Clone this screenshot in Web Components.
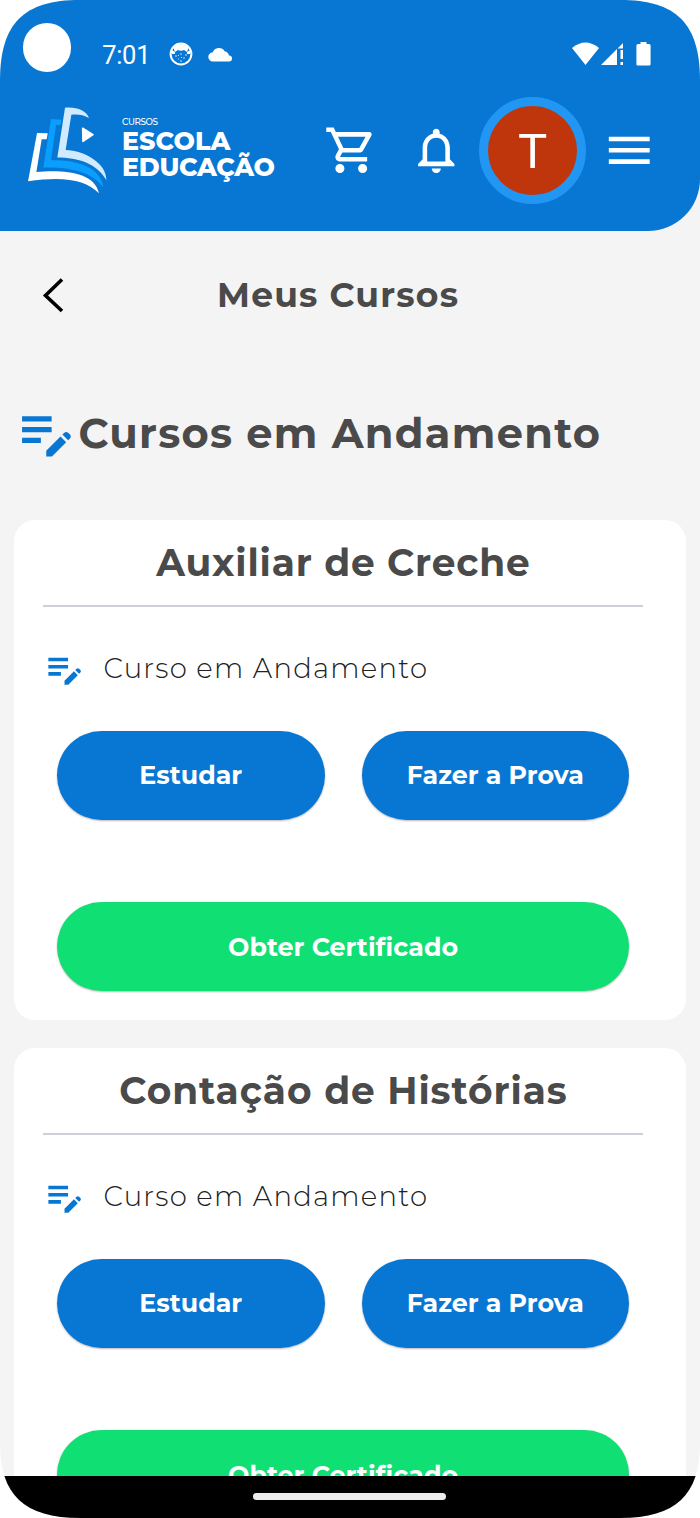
<!DOCTYPE html>
<html lang="pt-BR">
<head>
    <meta charset="UTF-8">
    <meta name="viewport" content="width=device-width, initial-scale=1.0">
    <title>Meus Cursos</title>
    <style>
        body {
            margin: 0;
            background: #fff;
            font-family: Montserrat, Inter, "Open Sans", sans-serif;
        }
    </style>
</head>
<body>
    <phone-screen>
        <app-header slot="header"></app-header>
        <page-bar width="241">Meus Cursos</page-bar>
        <section-title width="521.5">Cursos em Andamento</section-title>
        <course-card title="Auxiliar de Creche" width="373.5"></course-card>
        <course-card title="Contação de Histórias" width="447.5"></course-card>
    </phone-screen>

    <template id="phone-screen-template">
        <style>
            :host {
                display: flex;
                flex-direction: column;
                width: 700px;
                height: 1518px;
                background: #f4f4f4;
                overflow: hidden;
                clip-path: path("M0 81C0 23 24 0 80 0H620C676 0 700 23 700 81V1443C700 1495 676 1518 620 1518H80C24 1518 0 1495 0 1443Z");
            }
            main {
                flex: 1;
                min-height: 0;
                overflow: hidden;
            }
            nav {
                box-sizing: border-box;
                height: 42.5px;
                padding: 17.5px 0 0 253px;
                background: #000;
            }
            nav span {
                display: block;
                width: 193px;
                height: 7px;
                border-radius: 4px;
                background: #ececec;
            }
        </style>
        <slot name="header"></slot>
        <main><slot></slot></main>
        <nav><span></span></nav>
    </template>

    <template id="app-header-template">
        <style>
            :host {
                display: block;
                box-sizing: border-box;
                height: 230.5px;
                background: #0877d4;
                border-bottom-right-radius: 52px;
                color: #fff;
            }
            .status, .bar {
                display: flex;
                align-items: center;
            }
            .status {
                height: 95px;
                padding-left: 22.8px;
            }
            .camera {
                width: 48.4px;
                height: 48.4px;
                border-radius: 50%;
                background: #fff;
            }
            .status svg, .time {
                margin-top: 13px;
            }
            .time {
                width: 67px;
                margin-left: 31px;
                padding-top: 2px;
                font: 25.5px/30px Roboto, sans-serif;
                letter-spacing: -0.3px;
            }
            .cloud {
                margin-left: 15px;
            }
            .wifi {
                margin-left: 339px;
            }
            .signal {
                margin-left: 2px;
            }
            .battery {
                margin-left: 13px;
            }
            .bar {
                height: 111px;
                padding-left: 28px;
            }
            .name {
                display: flex;
                flex-direction: column;
                width: 201.5px;
                margin-left: 15px;
            }
            .name fit-text {
                font-size: 25.3px;
                line-height: 26px;
                font-weight: 800;
            }
            .name .small {
                font-size: 8.8px;
                line-height: 13px;
                font-weight: 500;
                margin-top: -6px;
            }
            .bell {
                margin-left: 31px;
            }
            .avatar {
                box-sizing: border-box;
                width: 107px;
                height: 107px;
                margin: 0 15.5px;
                border: 9px solid #2196f3;
                border-radius: 50%;
                background: #bf360c;
                font: 49px/91px Roboto, sans-serif;
                text-align: center;
            }
        </style>
        <div class="status">
            <span class="camera"></span>
            <span class="time">7:01</span>
            <svg class="cat" width="24" height="24" viewBox="0 0 24 24">
                <circle cx="12" cy="12" r="10.4" fill="none" stroke="#fff" stroke-width="2"/>
                <path d="M4 5Q12-1 20 5L18 10L15 8Q12 9.500 9 8L6 10Z" fill="#fff"/>
                <path d="M3 8l3 2v2H3ZM21 8l-3 2v2h3Z" fill="#fff"/>
                <path d="M6 14h2M9 17h1M11 12h2M14 16h2M16 13h2M11 19h2M9 13.500h1M12 15.500h1" stroke="#fff" stroke-width="1" opacity=".75"/>
            </svg>
            <svg class="cloud" width="25" height="15" viewBox="0 0 25 15">
                <path d="M5 14.500a4.600 4.600 0 0 1-.2-9.200A6.500 6.500 0 0 1 16.600 4.200 5.400 5.400 0 0 1 21 8.500a3 3 0 0 1 0 6Z" fill="#fff"/>
            </svg>
            <svg class="wifi" width="27" height="24" viewBox="0 0 27 24">
                <path d="M0 6Q13.500-5 27 6L13.500 23Z" fill="#fff"/>
            </svg>
            <svg class="signal" width="22" height="24" viewBox="0 0 22 24">
                <path d="M0 23L16 7V23Z" fill="#fff"/>
                <path d="M16.500 6.500L22 1V6.500ZM19.500 8h2.500v9h-2.500ZM19.500 20h2.500v3h-2.500Z" fill="#fff"/>
            </svg>
            <svg class="battery" width="15" height="24" viewBox="0 0 15 24">
                <path d="M4.500 0h6v2H13a1.600 1.600 0 0 1 1.600 1.600v18.500A1.500 1.500 0 0 1 13 23.600H2A1.500 1.500 0 0 1 .4 22V3.600A1.600 1.600 0 0 1 2 2h2.500Z" fill="#fff"/>
            </svg>
        </div>
        <div class="bar">
            <svg width="79" height="86.600" viewBox="39 35 237 260">
                <path d="M66 113L98 114L95 132L80 132L64 230C130 224 238 224 252 294C212 255 150 242 39 258Z" fill="#fff"/>
                <path d="M108 71L140 73L136 89L123 89L108 195C180 192 258 215 265 276C230 228 160 214 85 217Z" fill="#0a9fff"/>
                <path d="M150 37C185 34 214 45 222 68C205 57 185 56 169 58L152 164C210 166 276 205 274 254C245 205 190 187 127 187Z" fill="#d0ebff"/>
                <path d="M203 99L234 118L204 138Z" fill="#fff" stroke="#fff" stroke-width="5" stroke-linejoin="round"/>
            </svg>
            <div class="name">
                <fit-text class="small" width="36">CURSOS</fit-text>
                <fit-text width="108.500">ESCOLA</fit-text>
                <fit-text width="153">EDUCAÇÃO</fit-text>
            </div>
            <ui-icon name="cart" size="54.500"></ui-icon>
            <ui-icon class="bell" name="bell" size="54.500"></ui-icon>
            <span class="avatar">T</span>
            <ui-icon name="menu" size="54.500"></ui-icon>
        </div>
    </template>

    <template id="page-bar-template">
        <style>
            :host {
                display: flex;
                align-items: center;
                height: 129px;
                padding-left: 42px;
                color: #4a4a4a;
                font-size: 34.5px;
                font-weight: 700;
            }
            svg {
                margin-right: 153px;
            }
        </style>
        <svg width="22" height="36" viewBox="0 0 22 36">
            <path d="M20 2.500L3.500 18.500L20 34" fill="none" stroke="#000" stroke-width="3.600"/>
        </svg>
        <fit-text><slot></slot></fit-text>
    </template>

    <template id="section-title-template">
        <style>
            :host {
                display: flex;
                align-items: center;
                height: 146px;
                padding: 0 0 14.5px 14px;
                color: #4a4a4a;
                font-size: 41.5px;
                font-weight: 700;
            }
        </style>
        <ui-icon name="note" size="64.5"></ui-icon>
        <fit-text><slot></slot></fit-text>
    </template>

    <template id="course-card-template">
        <style>
            :host {
                display: block;
                box-sizing: border-box;
                width: 672px;
                height: 500px;
                margin: 0 0 28px 14px;
                padding: 0 43px 0 29px;
                border-radius: 21px;
                background: #fff;
            }
            h2 {
                margin: 0;
                height: 85px;
                line-height: 85px;
                border-bottom: 2px solid #cfcedb;
                color: #4a4a4a;
                font-size: 37.5px;
                font-weight: 700;
                text-align: center;
            }
            .state {
                display: flex;
                align-items: center;
                gap: 17.5px;
                box-sizing: border-box;
                height: 124px;
                padding-bottom: 2px;
                color: #222;
                font-size: 27.5px;
                font-weight: 300;
            }
            .actions {
                display: grid;
                grid-template-columns: 1fr 1fr;
                gap: 82px 37px;
                padding: 0 14px;
            }
            .wide {
                grid-column: 1 / 3;
                --pill-line: 90px;
            }
        </style>
        <h2><fit-text id="title"></fit-text></h2>
        <div class="state">
            <ui-icon name="note" size="43"></ui-icon>
            <fit-text width="323.5">Curso em Andamento</fit-text>
        </div>
        <div class="actions">
            <pill-button width="103">Estudar</pill-button>
            <pill-button width="177">Fazer a Prova</pill-button>
            <pill-button class="wide" color="#10df74" width="230">Obter Certificado</pill-button>
        </div>
    </template>

    <template id="pill-button-template">
        <style>
            :host {
                display: block;
            }
            button {
                display: block;
                width: 100%;
                height: 89px;
                padding: 0;
                border: 0;
                border-radius: 45px;
                background: var(--pill-color, #0877d4);
                box-shadow: 0 1px 2px rgba(0, 0, 0, 0.28);
                color: #fff;
                font: 700 25.3px/89px Montserrat, Inter, "Open Sans", sans-serif;
                line-height: var(--pill-line, 89px);
            }
        </style>
        <button><fit-text><slot></slot></fit-text></button>
    </template>

    <script>
        "use strict";
        const icons = {
            cart: "M15.550 13c.75 0 1.410-.41 1.750-1.030l3.580-6.490A.996.996 0 0 0 20.010 4H5.210l-.94-2H1v2h2l3.600 7.590-1.350 2.440C4.520 15.370 5.480 17 7 17h12v-2H7l1.100-2h7.450zM6.160 6h12.150l-2.760 5H8.530L6.160 6zM7 18a2 2 0 1 0 0 4 2 2 0 0 0 0-4zm10 0a2 2 0 1 0 0 4 2 2 0 0 0 0-4z",
            bell: "M12 22c1.100 0 2-.9 2-2h-4c0 1.100.9 2 2 2zm6-6v-5c0-3.070-1.630-5.640-4.500-6.320V4c0-.83-.67-1.500-1.500-1.500s-1.500.67-1.500 1.500v.68C7.640 5.360 6 7.920 6 11v5l-2 2v1h16v-1l-2-2zm-2 1H8v-6c0-2.480 1.510-4.500 4-4.500s4 2.020 4 4.500v6z",
            menu: "M3 18h18v-2H3v2zm0-5h18v-2H3v2zm0-7v2h18V6H3z",
            note: "M3 10h11v2H3v-2zm0-2h11V6H3v2zm0 8h7v-2H3v2zm15.010-3.130.71-.71c.39-.39 1.020-.39 1.410 0l.71.71c.39.39.39 1.020 0 1.410l-.71.71-2.120-2.120zm-.71.71-5.300 5.300V21h2.120l5.300-5.300-2.120-2.120z"
        };

        function attach(host, id) {
            const root = host.attachShadow({ mode: "open" });
            const template = document.getElementById(id);
            root.appendChild(document.importNode(template.content, true));
            return root;
        }

        // one line of text, letter-spaced to the given width
        class FitText extends HTMLElement {
            constructor() {
                super();
                this.attachShadow({ mode: "open" }).innerHTML = `
                    <style>
                        :host { display: inline-block; white-space: nowrap; text-align: left; vertical-align: top; }
                        span { display: inline-block; vertical-align: top; }
                    </style>
                    <span><slot></slot></span>`;
            }
            connectedCallback() {
                requestAnimationFrame(() => this.fit());
            }
            fit() {
                const span = this.shadowRoot.querySelector("span");
                const width = Number(this.getAttribute("width"));
                const natural = span.getBoundingClientRect().width;
                if (!width || !natural) return;
                // a slot inside this one may hold the text
                const nodes = span.querySelector("slot").assignedNodes({ flatten: true });
                const length = nodes.map(node => node.textContent).join("").trim().length;
                this.style.width = width + "px";
                span.style.letterSpacing = (width - natural) / (length - 1) + "px";
            }
        }

        class UiIcon extends HTMLElement {
            connectedCallback() {
                const size = this.getAttribute("size");
                const color = this.getAttribute("name") === "note" ? "#0877d4" : "#fff";
                this.attachShadow({ mode: "open" }).innerHTML = `
                    <style>:host { display: block; flex: none; } svg { display: block; }</style>
                    <svg width="${size}" height="${size}" viewBox="0 0 24 24">
                        <path d="${icons[this.getAttribute("name")]}" fill="${color}"/>
                    </svg>`;
            }
        }

        class PhoneScreen extends HTMLElement {
            constructor() {
                super();
                attach(this, "phone-screen-template");
            }
        }

        class AppHeader extends HTMLElement {
            constructor() {
                super();
                attach(this, "app-header-template");
            }
        }

        class PageBar extends HTMLElement {
            constructor() {
                super();
                const root = attach(this, "page-bar-template");
                root.querySelector("fit-text").setAttribute("width", this.getAttribute("width"));
            }
        }

        class SectionTitle extends HTMLElement {
            constructor() {
                super();
                const root = attach(this, "section-title-template");
                root.querySelector("fit-text").setAttribute("width", this.getAttribute("width"));
            }
        }

        class PillButton extends HTMLElement {
            connectedCallback() {
                const root = attach(this, "pill-button-template");
                root.querySelector("fit-text").setAttribute("width", this.getAttribute("width"));
                if (this.hasAttribute("color")) {
                    this.style.setProperty("--pill-color", this.getAttribute("color"));
                }
            }
        }

        class CourseCard extends HTMLElement {
            connectedCallback() {
                const root = attach(this, "course-card-template");
                const title = root.getElementById("title");
                title.textContent = this.title;
                title.setAttribute("width", this.getAttribute("width"));
            }
        }

        customElements.define("fit-text", FitText);
        customElements.define("ui-icon", UiIcon);
        customElements.define("pill-button", PillButton);
        customElements.define("app-header", AppHeader);
        customElements.define("page-bar", PageBar);
        customElements.define("section-title", SectionTitle);
        customElements.define("course-card", CourseCard);
        customElements.define("phone-screen", PhoneScreen);
    </script>
</body>
</html>
